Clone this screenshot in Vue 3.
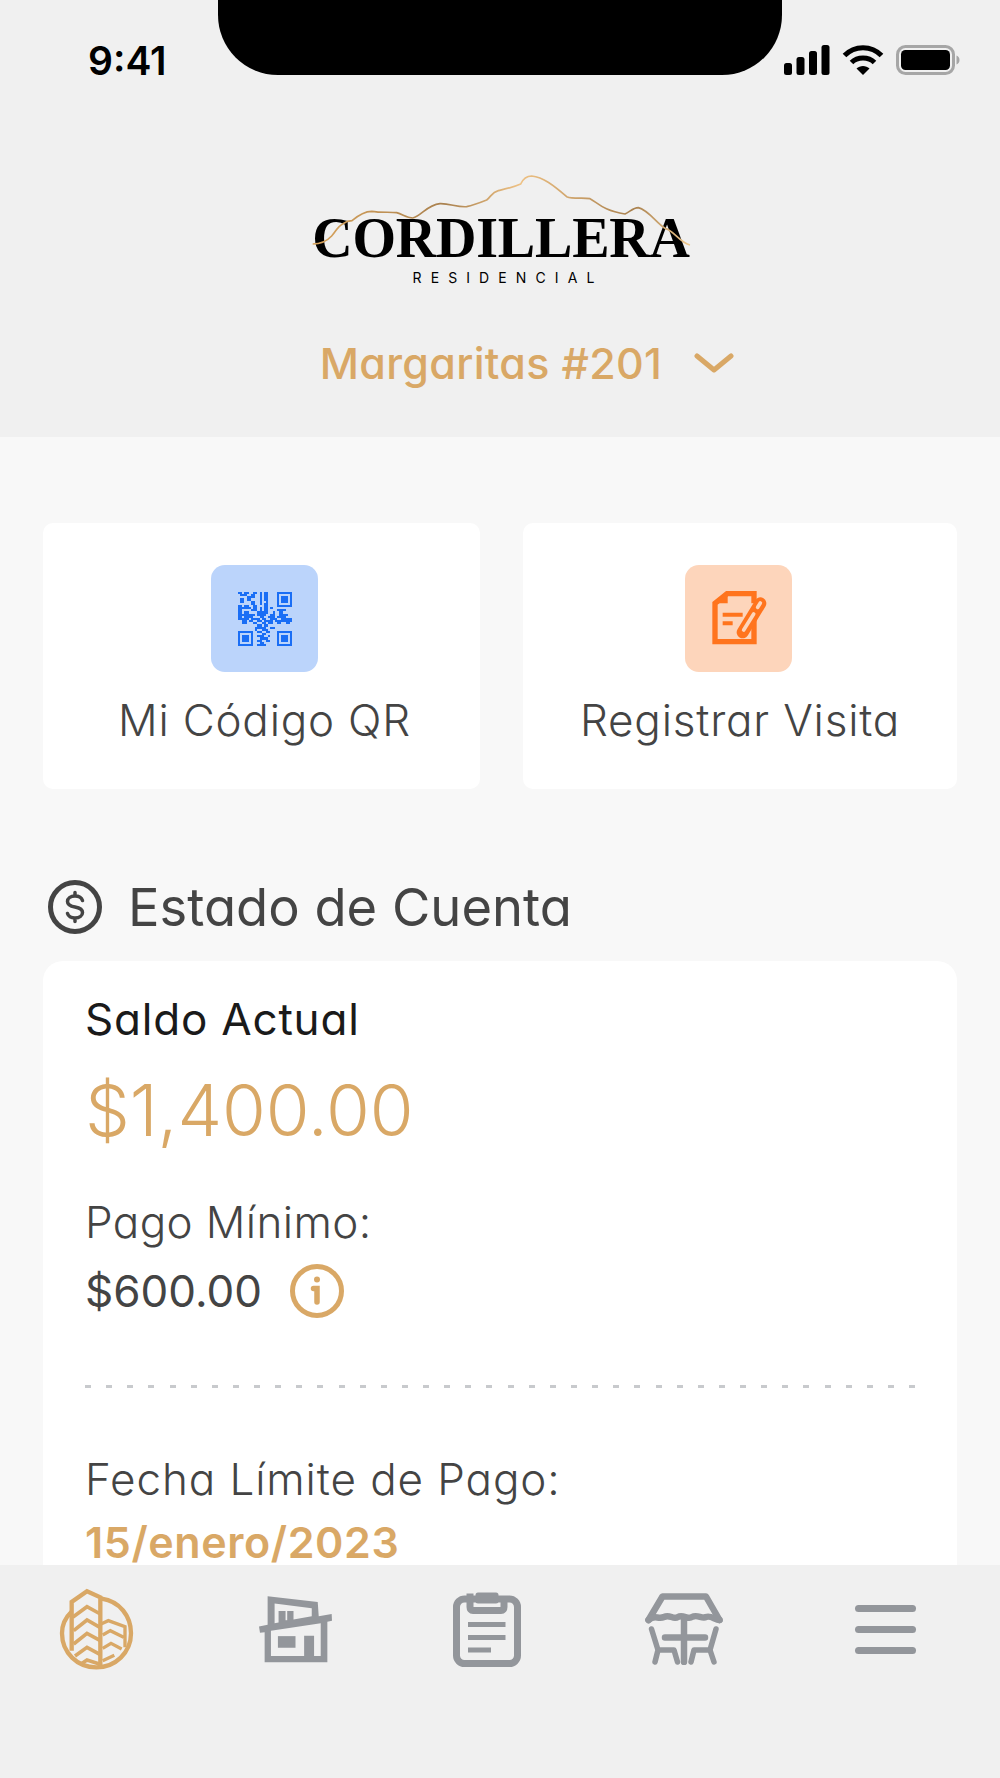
<template>
  <div class="screen">
    <div class="notch"></div>

    <header class="top">
      <div class="status">
        <span class="time">9:41</span>
        <div class="status-icons">
          <svg width="46" height="30" viewBox="0 0 46 30" fill="#000">
            <rect x="0" y="18" width="8" height="12" rx="2.5" />
            <rect x="12.500" y="12" width="8" height="18" rx="2.5" />
            <rect x="25" y="6" width="8" height="24" rx="2.5" />
            <rect x="37.500" y="0" width="8" height="30" rx="2.5" />
          </svg>
          <svg width="42" height="30" viewBox="0 0 42 30" fill="none" stroke="#000" stroke-width="5">
            <path d="M2.500 10.500C12.500 0 29.500 0 39.500 10.500" />
            <path d="M9.500 17.500C15.500 11.500 26.500 11.500 32.500 17.500" />
            <path d="M21 30L14.500 23.500C18 20 24 20 27.500 23.500Z" fill="#000" stroke="none" />
          </svg>
          <svg width="64" height="30" viewBox="0 0 64 30">
            <rect x="1.500" y="1.500" width="56" height="27" rx="8" fill="none" stroke="#a6a6a6" stroke-width="3" />
            <rect x="5" y="5" width="49" height="20" rx="4.500" fill="#000" />
            <path d="M60.500 10.500C62.500 11 63.500 13 63.500 15S62.500 19 60.500 19.500Z" fill="#a6a6a6" />
          </svg>
        </div>
      </div>

      <div class="logo">
        <svg class="logo-line" width="420" height="100" viewBox="0 0 1260 300" fill="none">
          <defs>
            <linearGradient id="gold" x1="0" y1="0" x2="1" y2="0">
              <stop offset="0" stop-color="#d9a45c" />
              <stop offset="0.35" stop-color="#a9814f" />
              <stop offset="0.55" stop-color="#eec184" />
              <stop offset="0.85" stop-color="#a9814f" />
              <stop offset="1" stop-color="#f0c98e" />
            </linearGradient>
          </defs>
          <path
            d="M68 252C95 252 112 242 125 228C138 214 142 200 158 192L172 184L186 182C200 170 222 154 245 154C270 158 300 156 320 158C340 164 350 174 368 174C395 168 410 135 450 131C480 130 500 142 530 140C550 136 570 128 590 120C605 108 605 97 625 92C650 86 670 82 692 72C700 55 710 48 725 48C760 52 790 75 830 110C850 118 880 112 900 116C925 130 940 152 1005 162C1020 155 1030 143 1045 143C1075 150 1100 190 1125 205C1150 210 1170 248 1200 255"
            stroke="url(#gold)"
            stroke-width="5"
          />
        </svg>
        <div class="logo-name">CORDILLERA</div>
        <div class="logo-sub">RESIDENCIAL</div>
      </div>

      <div class="unit">
        <span>Margaritas #201</span>
        <svg width="40" height="20" viewBox="0 0 40 20" fill="none" stroke="#d9a866" stroke-width="5" stroke-linecap="round" stroke-linejoin="round">
          <path d="M3 3L20 17L37 3" />
        </svg>
      </div>
    </header>

    <main class="content">
      <section class="actions">
        <div class="action qr-card">
          <div class="action-icon qr">
            <svg width="54" height="54" viewBox="0 0 25 25" fill="#1a6ef5" shape-rendering="crispEdges">
              <template v-for="(row, y) in qrRows" :key="y">
                <template v-for="(cell, x) in row" :key="x">
                  <rect v-if="cell === '1'" :x="x" :y="y" width="1" height="1" />
                </template>
              </template>
            </svg>
          </div>
          <span>Mi Código QR</span>
        </div>
        <div class="action">
          <div class="action-icon note">
            <svg width="75" height="70" viewBox="0 0 225 210" fill="none" stroke="#ff741d" stroke-linecap="butt">
              <path d="M159 58V29H78L42 58V173H159V105" stroke-width="16" />
              <path d="M80 24L36 58H80Z" fill="#ff741d" stroke="none" />
              <path d="M65 92H125M65 118H95" stroke-width="12" />
              <path d="M125 145L178 58" stroke-width="36" stroke-linecap="round" />
              <path d="M128 138L158 90M170 70L178 57" stroke="#fdd5bb" stroke-width="11" stroke-linecap="round" />
            </svg>
          </div>
          <span>Registrar Visita</span>
        </div>
      </section>

      <h2 class="section-title">
        <svg width="56" height="56" viewBox="0 0 56 56" fill="none" stroke="#444" stroke-width="5">
          <circle cx="28" cy="28" r="24.500" />
          <path d="M35.500 21.500C34.500 18.500 32 17 28 17C23.500 17 20.500 19.300 20.500 22.500C20.500 26 24 27.300 28 28C32 28.700 35.500 30 35.500 33.500C35.500 36.700 32.500 39 28 39C24 39 21.500 37.500 20.500 34.500M28 13.500V17M28 39V42.500" stroke-width="3.500" stroke-linecap="round" />
        </svg>
        Estado de Cuenta
      </h2>

      <section class="account">
        <div class="balance-label">Saldo Actual</div>
        <div class="balance">$1,400.00</div>
        <div class="line-label first">Pago Mínimo:</div>
        <div class="min-row">
          <span>$600.00</span>
          <svg width="54" height="54" viewBox="0 0 54 54" fill="none" stroke="#d9a866" stroke-width="5" stroke-linecap="round">
            <circle cx="27" cy="27" r="24.500" />
            <path d="M23.500 24.500H27V38" stroke-width="5.500" />
            <circle cx="27" cy="15.500" r="3" fill="#d9a866" stroke="none" />
          </svg>
        </div>
        <div class="dots"></div>
        <div class="line-label second">Fecha Límite de Pago:</div>
        <div class="due">15/enero/2023</div>
      </section>
    </main>

    <nav class="tabs">
      <div class="tab home">
        <svg width="90" height="95" viewBox="0 0 270 285" fill="none" stroke="#d9a866" stroke-width="13" stroke-linejoin="miter">
          <path d="M152 56C206 64 240 108 240 160C240 218 193 262 136 262C79 262 33 218 33 160C33 135 44 112 62 95" />
          <path d="M62 212V66L108 34L148 52V258" />
          <path d="M65 112L108 80L148 102M68 152L108 120L148 143M68 192L108 160L148 182M72 228L108 202L148 224M90 252L108 240L145 252" stroke-width="11" />
          <path d="M150 132L172 122L222 140V202M155 165L178 152L218 172M155 205L180 190L212 207M155 242L190 226" stroke-width="10" />
        </svg>
      </div>
      <div class="tab house">
        <svg width="73" height="67" viewBox="686 138 220 200" fill="#93969b">
          <path fill-rule="evenodd" d="M712 138L863 155L866 198L905 191L906 212L892 215V337H703V246L689 248L686 229L712 224ZM733 160V219L745 217V182H790V208L845 198V174ZM722 242V318H822V257H852V318H872V219Z" />
          <path d="M743 258H796V293H743Z" />
          <path d="M766 182H771V210H766Z" fill="#f0f0f0" />
        </svg>
      </div>
      <div class="tab clipboard">
        <svg width="68" height="76" viewBox="0 0 68 76" fill="none" stroke="#93969b" stroke-width="7">
          <rect x="3.500" y="8" width="61" height="64.500" rx="8" />
          <path d="M17 2.500V16C17 18 18 19.500 20 19.500H48C50 19.500 51 18 51 16V6" stroke-linejoin="round" />
          <path d="M25 4H43V10H25Z" fill="#93969b" stroke="#93969b" stroke-width="5" stroke-linejoin="round" />
          <path d="M15 33.500H52.500M15 46.500H52.500" stroke-width="5" />
          <path d="M15 59H38" stroke-width="5" />
        </svg>
      </div>
      <div class="tab table">
        <svg width="78" height="72" viewBox="0 0 78 72" fill="none" stroke="#93969b" stroke-width="6.500" stroke-linecap="round" stroke-linejoin="round">
          <path d="M3.500 27L17.500 3.500H61L74.500 27" />
          <path d="M3.500 27C10 21 13 27 19 24C25 21 28 27 33 24C38 21 43 27 47 24C52 21 57 26 61 24C66 22 70 27 74.500 27" />
          <path d="M39 26V69M20 44.500H60" />
          <path d="M6.500 36L13 57L10 69M71 36L65 57L69 69M13 57H29L32.500 69M65 57H49L46 69" stroke-width="5.500" />
        </svg>
      </div>
      <div class="tab">
        <div class="burger"><i></i><i></i><i></i></div>
      </div>
    </nav>
  </div>
</template>

<script setup>
const qrRows = [
  '1101100110101100001111111',
  '0111001100101100001000001',
  '0000111100101100001011101',
  '0110110000101100001011101',
  '0110001100100100001011101',
  '0000001100101100001000001',
  '1101100110001100001111111',
  '1111110110101101000000000',
  '1100001110101100001111000',
  '1101100001111100100110000',
  '1111111101111001100111100',
  '1101111000110011101111000',
  '1111101111011001110011111',
  '0011011001101111011111111',
  '0011000110011011001100110',
  '0000000001101100000000000',
  '0000000011111001100000000',
  '0000000010011100000000000',
  '1111111001100110001111111',
  '1000001000011000001000001',
  '1011101001110010001011101',
  '1011101000111100001011101',
  '1011101001100110001011101',
  '1000001000110000001000001',
  '1111111001111000001111111'
]
</script>

<style scoped>
.screen {
  position: relative;
  display: flex;
  flex-direction: column;
  width: 1000px;
  height: 1778px;
  overflow: hidden;
  background: #f8f8f8;
  font-family: Inter, "Liberation Sans", sans-serif;
  font-feature-settings: "cv11";
  color: #444;
}

.notch {
  position: absolute;
  top: 0;
  left: 218px;
  width: 564px;
  height: 75px;
  background: #000;
  border-radius: 0 0 60px 60px;
}

.top {
  flex: none;
  height: 437px;
  background: #f0f0f0;
}

.status {
  display: flex;
  justify-content: space-between;
  height: 110px;
  padding: 45px 40px 0 88px;
  box-sizing: border-box;
}

.time {
  font-size: 39px;
  line-height: 31px;
  font-weight: 600;
  color: #000;
  font-feature-settings: normal;
}

.status-icons {
  display: flex;
  gap: 12px;
  height: 30px;
}

.logo {
  position: relative;
  width: 420px;
  height: 130px;
  margin: 50px 0 0 290px;
  padding-top: 50px;
  box-sizing: border-box;
  text-align: center;
  color: #000;
}

.logo-line {
  position: absolute;
  top: 0;
  left: 0;
}

.logo-name {
  font-family: "Liberation Serif", serif;
  font-weight: 700;
  font-size: 56px;
  line-height: 56px;
  letter-spacing: -0.2px;
  margin-left: 22px;
  margin-right: 20px;
  white-space: nowrap;
}

.logo-sub {
  font-size: 14px;
  line-height: 16px;
  letter-spacing: 9.1px;
  margin: 4px 0 0 16px;
  font-weight: 400;
  font-feature-settings: normal;
}

.unit {
  display: flex;
  align-items: center;
  justify-content: center;
  gap: 32px;
  height: 56px;
  margin-top: 45px;
  margin-left: 54px;
  font-size: 43px;
  font-weight: 500;
  letter-spacing: 0.3px;
  color: #d9a866;
}

.content {
  flex: 1;
  min-height: 0;
  overflow: hidden;
  padding: 86px 43px 0;
}

.actions {
  display: grid;
  grid-template-columns: 437px 434px;
  gap: 43px;
}

.action {
  display: flex;
  flex-direction: column;
  align-items: center;
  height: 266px;
  padding-top: 42px;
  box-sizing: border-box;
  background: #fff;
  border-radius: 10px;
  font-size: 44px;
  line-height: 50px;
  font-weight: 300;
  letter-spacing: 0.8px;
}

.qr-card {
  padding-left: 6px;
}

.action-icon {
  display: flex;
  align-items: center;
  justify-content: center;
  width: 107px;
  height: 107px;
  margin-bottom: 23px;
  border-radius: 14px;
}

.qr {
  background: #bbd4fb;
}

.note {
  margin-right: 3px;
  background: #fdd5bb;
}

.section-title {
  display: flex;
  align-items: center;
  gap: 25px;
  height: 56px;
  margin: 90px 0 26px 4px;
  font-size: 52.5px;
  font-weight: 400;
}

.account {
  height: 800px;
  padding: 36px 42px 0;
  box-sizing: border-box;
  background: #fff;
  border-radius: 20px;
}

.balance-label {
  font-size: 44px;
  line-height: 44px;
  font-weight: 400;
  letter-spacing: 0.8px;
  color: #1a1a1a;
}

.balance {
  margin-top: 24px;
  font-size: 71px;
  line-height: 90px;
  font-weight: 300;
  letter-spacing: -0.1px;
  color: #d9a866;
}

.line-label {
  font-size: 44px;
  line-height: 44px;
  font-weight: 300;
}

.line-label.first {
  margin-top: 45px;
  letter-spacing: 0.4px;
}

.line-label.second {
  margin-top: 69px;
  letter-spacing: 0.9px;
}

.min-row {
  display: flex;
  align-items: center;
  gap: 28px;
  height: 56px;
  margin-top: 19px;
  font-size: 44px;
  font-weight: 400;
}

.dots {
  height: 3px;
  margin-top: 66px;
  background: repeating-linear-gradient(90deg, #c8cacd 0 6px, transparent 6px 21.13px);
}

.due {
  margin-top: 19px;
  font-size: 43px;
  line-height: 44px;
  font-weight: 600;
  letter-spacing: 0.6px;
  color: #d9a866;
}

.tabs {
  position: absolute;
  left: 0;
  right: 0;
  bottom: 0;
  display: grid;
  grid-template-columns: 191px 208px 175px 220px 182px;
  align-items: start;
  height: 213px;
  padding-top: 25px;
  box-sizing: border-box;
  background: #f0f0f0;
}

.tab {
  display: flex;
  justify-content: center;
}

.home {
  margin-top: -10px;
}

.house {
  margin-top: 6px;
}

.clipboard {
  margin-top: 1px;
}

.table {
  margin-top: 3px;
}

.burger {
  display: flex;
  flex-direction: column;
  gap: 14px;
  width: 61px;
  margin-top: 15px;
}

.burger i {
  display: block;
  height: 7px;
  border-radius: 4px;
  background: #93969b;
}
</style>
